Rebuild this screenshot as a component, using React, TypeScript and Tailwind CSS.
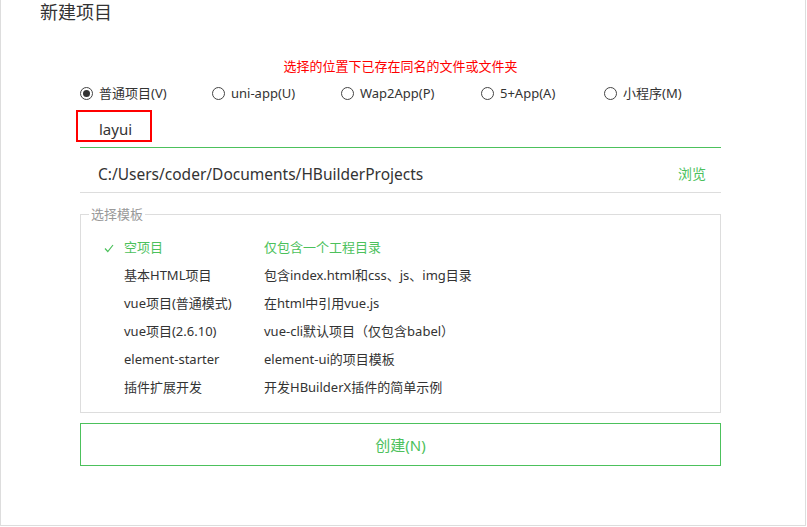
import React, { useState } from 'react';

const font = { fontFamily: '"Noto Sans", "Noto Sans CJK SC", sans-serif' };

const projectTypes = [
  { key: 'normal', label: '普通项目(V)', w: 'w-[132px]' },
  { key: 'uni', label: 'uni-app(U)', w: 'w-[129px]' },
  { key: 'wap', label: 'Wap2App(P)', w: 'w-[140px]' },
  { key: 'plus', label: '5+App(A)', w: 'w-[123px]' },
  { key: 'mini', label: '小程序(M)', w: 'w-auto' },
];

const templates = [
  { name: '空项目', desc: '仅包含一个工程目录' },
  { name: '基本HTML项目', desc: '包含index.html和css、js、img目录' },
  { name: 'vue项目(普通模式)', desc: '在html中引用vue.js' },
  { name: 'vue项目(2.6.10)', desc: 'vue-cli默认项目（仅包含babel）' },
  { name: 'element-starter', desc: 'element-ui的项目模板' },
  { name: '插件扩展开发', desc: '开发HBuilderX插件的简单示例' },
];

function Radio({ checked }: { checked: boolean }) {
  return (
    <span className="w-[13px] h-[13px] rounded-full border border-[#444] flex items-center justify-center shrink-0">
      {checked && <span className="w-[7px] h-[7px] rounded-full bg-[#333]" />}
    </span>
  );
}

function Check() {
  return (
    <svg width="10" height="9" viewBox="0 0 10 9" className="shrink-0">
      <polyline points="1,4.5 3.8,7.5 9,1" fill="none" stroke="#4cc15c" strokeWidth="1.2" />
    </svg>
  );
}

export default function App() {
  const [type, setType] = useState('normal');
  const [selected, setSelected] = useState(0);

  return (
    <div style={font} className="w-[806px] h-[526px] border-l border-r border-b border-[#ddd] bg-white text-[#333]">
      <div className="pl-[39px] h-[26px] text-[18px] leading-[24px]">新建项目</div>

      <div className="ml-[79px] w-[641px]">
        <div className="mt-[30px] h-[20px] leading-[20px] text-[13px] text-[#f00] text-center">
          选择的位置下已存在同名的文件或文件夹
        </div>

        <div className="mt-[7px] h-[20px] flex items-center text-[13px]">
          {projectTypes.map((t) => (
            <label key={t.key} className={'flex items-center gap-[6px] cursor-pointer ' + t.w} onClick={() => setType(t.key)}>
              <Radio checked={type === t.key} />
              <span className="leading-[20px]">{t.label}</span>
            </label>
          ))}
        </div>

        <div className="relative h-[45px] border-b border-[#4cc15c]">
          <div className="pl-[19px] pt-[16px] leading-[20px] text-[15px]">layui</div>
          <div className="absolute left-[-4px] top-[7px] w-[76px] h-[32px] border-2 border-[#f00]" />
        </div>

        <div className="h-[45px] border-b border-[#ddd] flex justify-between pt-[16px] leading-[20px]">
          <span className="pl-[18px] text-[15.5px]">C:/Users/coder/Documents/HBuilderProjects</span>
          <span className="pr-[15px] text-[14px] text-[#4cc15c]">浏览</span>
        </div>

        <fieldset className="mt-[11px] border border-[#ddd] pt-[10px] pb-[10px]">
          <legend className="ml-[8px] px-[2px] text-[13px] leading-[20px] text-[#999]">选择模板</legend>
          <div className="pl-[23px]">
            {templates.map((t, i) => (
              <div
                key={t.name}
                onClick={() => setSelected(i)}
                className={
                  'h-[28px] flex items-center text-[13px] cursor-pointer ' +
                  (selected === i ? 'text-[#4cc15c]' : 'text-[#333]')
                }
              >
                <span className="w-[20px] flex items-center">{selected === i && <Check />}</span>
                <span className="w-[140px]">{t.name}</span>
                <span>{t.desc}</span>
              </div>
            ))}
          </div>
        </fieldset>

        <button className="mt-[10px] w-full h-[43px] border border-[#4cc15c] text-[#4cc15c] text-[15px] leading-[20px]">
          创建(N)
        </button>
      </div>
    </div>
  );
}
